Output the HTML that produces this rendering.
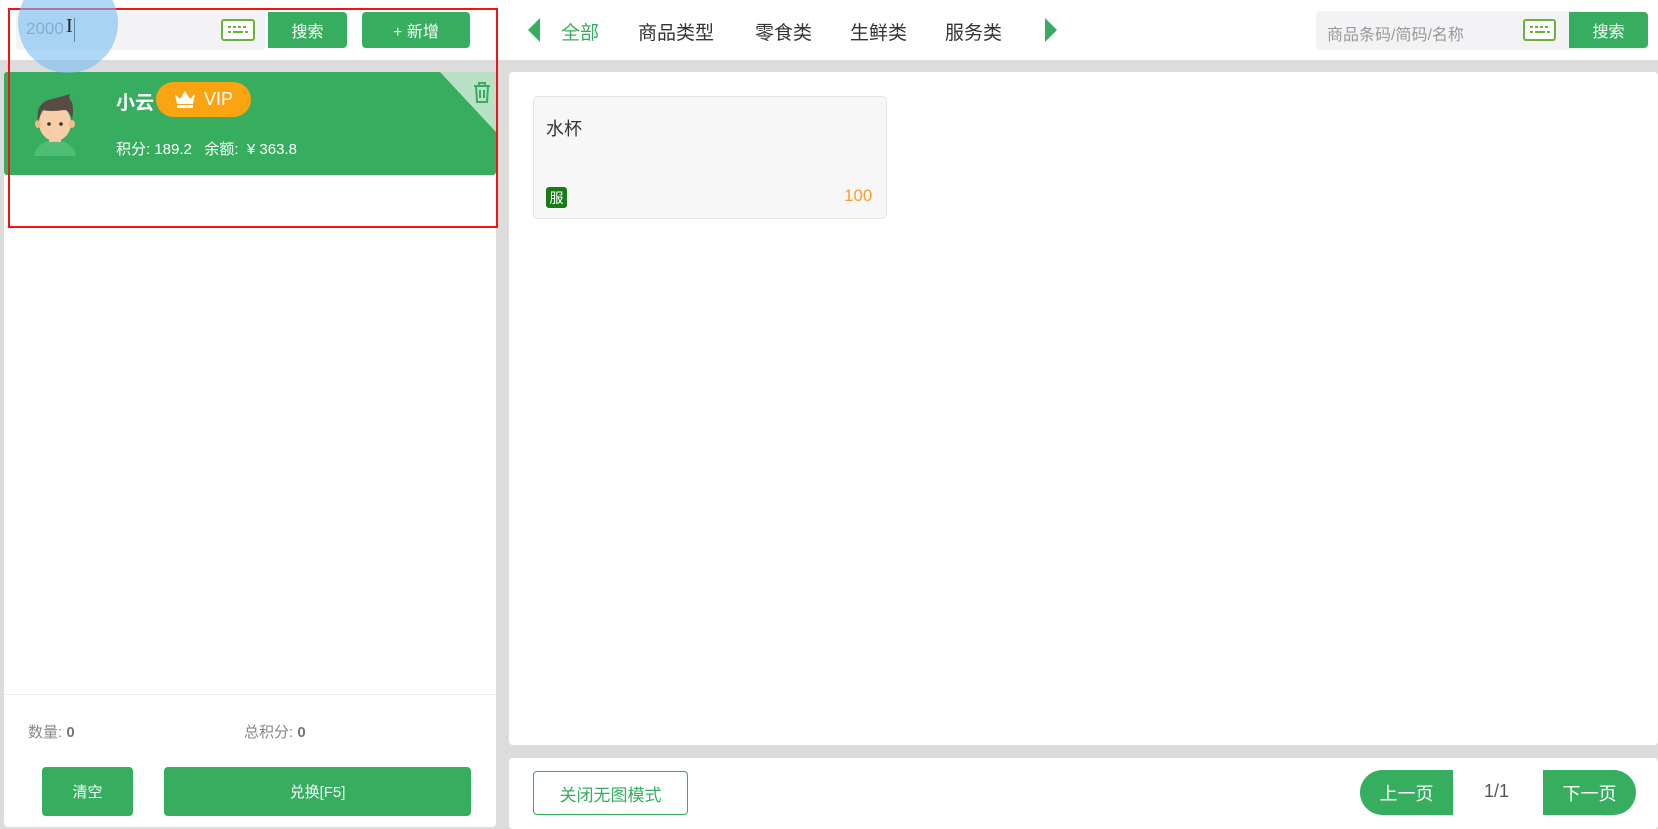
<!DOCTYPE html>
<html><head><meta charset="utf-8">
<style>
*{margin:0;padding:0;box-sizing:border-box}
body{width:1658px;height:829px;background:#dcdcdc;font-family:"Liberation Sans","Noto Sans CJK SC",sans-serif;position:relative;overflow:hidden}
.a{position:absolute}
.btn{position:absolute;background:#37ad5f;color:#fff;border-radius:4px;display:flex;align-items:center;justify-content:center;font-size:16px}
.kb{position:absolute;border:2px solid #6bb33d;border-radius:3px;background:#fff}
.tab{position:absolute;top:18px;font-size:19px;color:#333}
</style></head><body>
<div class="a" style="left:0;top:0;width:1658px;height:60px;background:#fff"></div>
<!-- left search -->
<div class="a" style="left:16px;top:11px;width:250px;height:39px;background:#f3f3f5;border-radius:4px"></div>
<div class="a" style="left:26px;top:19px;font-size:17px;color:#8a9aaa">2000</div>
<div class="a" style="left:74px;top:18px;width:1px;height:24px;background:#333"></div>
<div class="kb" style="left:221px;top:19px;width:34px;height:22px"><svg width="30" height="18" style="position:absolute;left:0;top:0"><g fill="#6bb33d"><rect x="5" y="5" width="3" height="2"/><rect x="10" y="5" width="3" height="2"/><rect x="15" y="5" width="3" height="2"/><rect x="20" y="5" width="3" height="2"/><rect x="5" y="10" width="3" height="2"/><rect x="10" y="10" width="10" height="2"/><rect x="22" y="10" width="3" height="2"/></g></svg></div>
<div class="btn" style="left:268px;top:12px;width:79px;height:36px;border-radius:0 4px 4px 0">搜索</div>
<div class="btn" style="left:362px;top:12px;width:108px;height:36px">+ 新增</div>
<!-- tabs -->
<svg class="a" style="left:528px;top:18px" width="12" height="24"><path d="M12 0L0 12L12 24Z" fill="#37ad5f"/></svg>
<div class="tab" style="left:561px;color:#37ad5f">全部</div>
<div class="tab" style="left:638px">商品类型</div>
<div class="tab" style="left:755px">零食类</div>
<div class="tab" style="left:850px">生鲜类</div>
<div class="tab" style="left:945px">服务类</div>
<svg class="a" style="left:1045px;top:18px" width="12" height="24"><path d="M0 0L12 12L0 24Z" fill="#37ad5f"/></svg>
<!-- right search -->
<div class="a" style="left:1316px;top:11px;width:330px;height:39px;background:#f3f3f5;border-radius:4px"></div>
<div class="a" style="left:1327px;top:21px;font-size:16px;color:#999">商品条码/简码/名称</div>
<div class="kb" style="left:1523px;top:19px;width:33px;height:22px"><svg width="29" height="18" style="position:absolute;left:0;top:0"><g fill="#6bb33d"><rect x="5" y="5" width="3" height="2"/><rect x="10" y="5" width="3" height="2"/><rect x="15" y="5" width="3" height="2"/><rect x="20" y="5" width="3" height="2"/><rect x="5" y="10" width="3" height="2"/><rect x="10" y="10" width="10" height="2"/><rect x="22" y="10" width="3" height="2"/></g></svg></div>
<div class="btn" style="left:1569px;top:12px;width:79px;height:36px;border-radius:0 4px 4px 0">搜索</div>
<!-- left panel -->
<div class="a" style="left:4px;top:72px;width:492px;height:755px;background:#fff;border-radius:4px"></div>
<div class="a" style="left:4px;top:72px;width:492px;height:103px;background:#37ad5f;border-radius:3px;overflow:hidden">
  <svg class="a" style="left:436px;top:0" width="56" height="60"><path d="M0 0H56V60Z" fill="#b9e2c4"/></svg>
  <svg class="a" style="left:469px;top:10px" width="18" height="22"><g fill="none" stroke="#37ad5f" stroke-width="2"><path d="M1 4H17M6 4V1H12V4M3 4L4 20H14L15 4M7 8V16M11 8V16"/></g></svg>
</div>
<svg class="a" style="left:30px;top:90px" width="50" height="66" viewBox="0 0 50 66">
<path d="M4 66Q6 52 25 50Q44 52 46 66Z" fill="#4fbd73"/>
<rect x="19" y="40" width="12" height="12" fill="#f5c49d"/>
<ellipse cx="25" cy="33" rx="16" ry="18" fill="#f9cda7"/>
<ellipse cx="8" cy="34" rx="3" ry="4" fill="#f5b98e"/><ellipse cx="42" cy="34" rx="3" ry="4" fill="#f5b98e"/>
<path d="M8 32Q5 12 22 9Q34 6 40 4Q38 9 42 12Q44 20 42 30Q40 20 34 20Q22 22 12 20Q10 26 8 32Z" fill="#5a4a45"/>
<circle cx="19" cy="34" r="1.8" fill="#333"/><circle cx="31" cy="34" r="1.8" fill="#333"/>
</svg>
<div class="a" style="left:116px;top:88px;font-size:19px;font-weight:bold;color:#fff">小云</div>
<div class="a" style="left:156px;top:82px;width:95px;height:35px;background:#f9a410;border-radius:18px"></div>
<svg class="a" style="left:174px;top:89px" width="22" height="20"><path d="M1 5L6 10L11 2L16 10L21 5L19 15H3Z" fill="#fff"/><rect x="3" y="16" width="16" height="3" fill="#fff"/></svg>
<div class="a" style="left:204px;top:89px;font-size:18px;color:#fff">VIP</div>
<div class="a" style="left:116px;top:138px;font-size:15px;color:#fff">积分: 189.2&nbsp;&nbsp; 余额:&nbsp; ¥ 363.8</div>
<div class="a" style="left:4px;top:694px;width:492px;height:1px;background:#eee"></div>
<div class="a" style="left:28px;top:721px;font-size:15px;color:#888">数量: <b style="color:#777">0</b></div>
<div class="a" style="left:244px;top:721px;font-size:15px;color:#888">总积分: <b style="color:#777">0</b></div>
<div class="btn" style="left:42px;top:767px;width:91px;height:49px;font-size:15px">清空</div>
<div class="btn" style="left:164px;top:767px;width:307px;height:49px;font-size:15px">兑换[F5]</div>
<!-- red box -->
<div class="a" style="left:8px;top:8px;width:490px;height:220px;border:2px solid #f01414"></div>
<div class="a" style="left:18px;top:-27px;width:100px;height:100px;border-radius:50%;background:rgba(120,190,240,0.6)"></div>
<div class="a" style="left:66px;top:15px;font-size:20px;color:#222;font-family:'Liberation Serif',serif">I</div>
<!-- right panel -->
<div class="a" style="left:509px;top:72px;width:1149px;height:673px;background:#fff;border-radius:4px"></div>
<div class="a" style="left:533px;top:96px;width:354px;height:123px;background:#f7f7f7;border:1px solid #e4e4e4;border-radius:5px"></div>
<div class="a" style="left:546px;top:115px;font-size:18px;color:#333">水杯</div>
<div class="a" style="left:546px;top:187px;width:21px;height:21px;background:#1a7a1a;border-radius:3px;color:#fff;font-size:14px;display:flex;align-items:center;justify-content:center">服</div>
<div class="a" style="left:844px;top:186px;font-size:17px;color:#f5a030">100</div>
<div class="a" style="left:509px;top:758px;width:1149px;height:71px;background:#fff;border-radius:4px"></div>
<div class="a" style="left:533px;top:771px;width:155px;height:44px;border:1.5px solid #37ad5f;border-radius:4px;color:#37ad5f;font-size:17px;display:flex;align-items:center;justify-content:center">关闭无图模式</div>
<div class="btn" style="left:1360px;top:770px;width:93px;height:45px;border-radius:23px 0 0 23px;font-size:18px">上一页</div>
<div class="a" style="left:1484px;top:781px;font-size:18px;color:#555">1/1</div>
<div class="btn" style="left:1543px;top:770px;width:93px;height:45px;border-radius:0 23px 23px 0;font-size:18px">下一页</div>
</body></html>
